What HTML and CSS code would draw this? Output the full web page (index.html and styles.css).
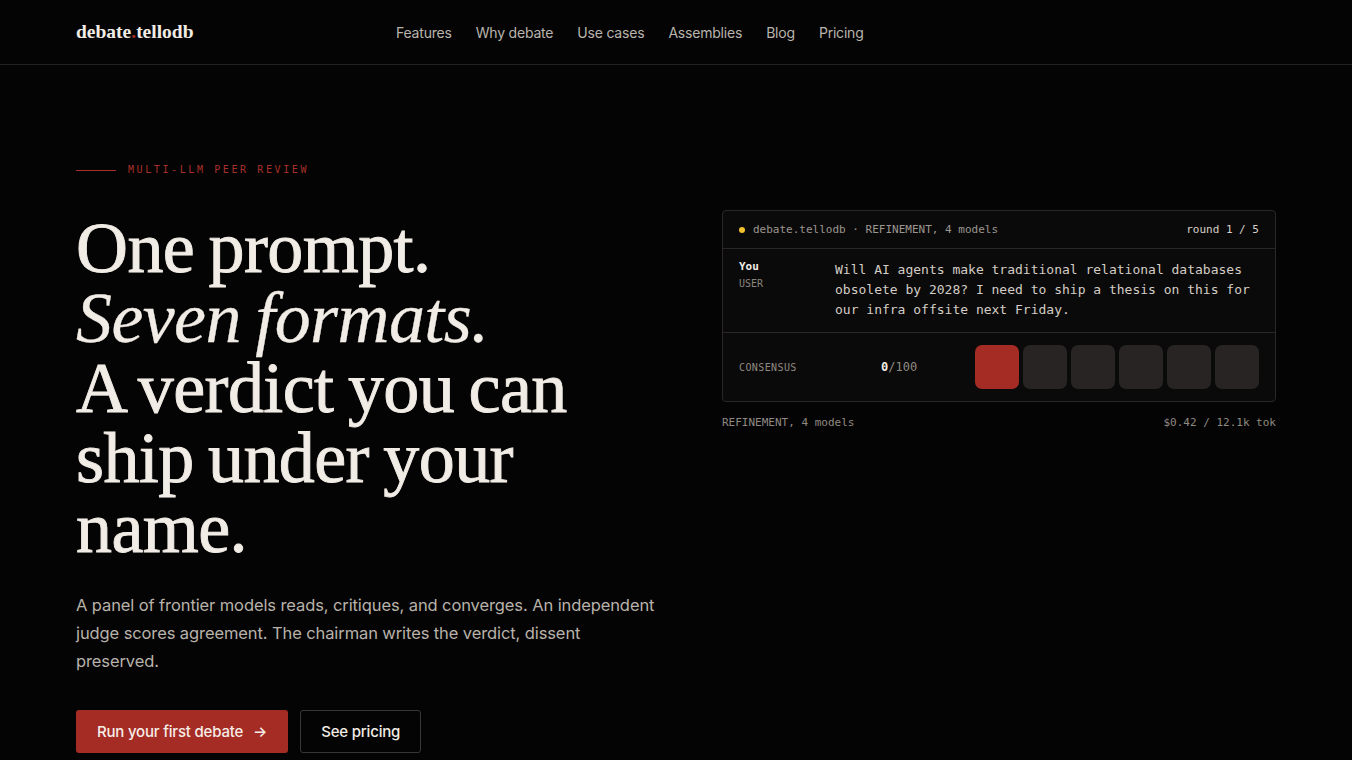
FILE: index.html
```html
<!DOCTYPE html>
<html>

	<head>
		<meta charset="UTF-8">
		<title>debate.tellodb</title>
		<link rel="stylesheet" href="styles.css">
	</head>

	<body>
		<header class="topbar">
			<div class="wrap topbar-inner">
				<a class="logo" href="#">debate<span class="logo-dot">.</span>tellodb</a>
				<nav class="nav">
					<a href="#">Features</a>
					<a href="#">Why debate</a>
					<a href="#">Use cases</a>
					<a href="#">Assemblies</a>
					<a href="#">Blog</a>
					<a href="#">Pricing</a>
				</nav>
			</div>
		</header>

		<section class="hero wrap">
			<div class="hero-copy">
				<div class="eyebrow"><span class="eyebrow-line"></span>MULTI-LLM PEER REVIEW</div>
				<h1 class="headline">One prompt.<br><em>Seven formats.</em><br>A verdict you can ship under your name.</h1>
				<p class="lede">A panel of frontier models reads, critiques, and converges. An independent judge scores agreement. The chairman writes the verdict, dissent preserved.</p>
				<div class="actions">
					<a class="btn btn-primary" href="#">Run your first debate <span class="arrow">&rarr;</span></a>
					<a class="btn btn-ghost" href="#">See pricing</a>
				</div>
			</div>

			<div class="hero-demo">
				<div class="card">
					<div class="card-head">
						<span class="status-dot"></span>
						<span class="card-title">debate.tellodb &middot; REFINEMENT, 4 models</span>
						<span class="card-round">round 1 / 5</span>
					</div>
					<div class="msg">
						<div class="msg-who">
							<div class="msg-name">You</div>
							<div class="msg-role">USER</div>
						</div>
						<div class="msg-text">Will AI agents make traditional relational databases obsolete by 2028? I need to ship a thesis on this for our infra offsite next Friday.</div>
					</div>
					<div class="consensus">
						<div class="consensus-label">CONSENSUS</div>
						<div class="consensus-score"><b>0</b>/100</div>
						<div class="rounds">
							<span class="round-cell on"></span>
							<span class="round-cell"></span>
							<span class="round-cell"></span>
							<span class="round-cell"></span>
							<span class="round-cell"></span>
							<span class="round-cell"></span>
						</div>
					</div>
				</div>
				<div class="card-foot">
					<span>REFINEMENT, 4 models</span>
					<span>$0.42 / 12.1k tok</span>
				</div>
			</div>
		</section>
	</body>

</html>
```

FILE: styles.css
```css
html,
body {
	margin: 0;
	background: #050404;
	color: #efeae3;
	font-family: Inter, "Noto Sans", sans-serif;
}

a {
	color: inherit;
	text-decoration: none;
}

.wrap {
	width: 1200px;
	margin: 0 auto;
}

/* top bar */

.topbar {
	border-bottom: 1px solid #232121;
}

.topbar-inner {
	height: 64px;
	display: grid;
	grid-template-columns: 320px 1fr;
	align-items: center;
}

.logo {
	font-family: "Liberation Serif", serif;
	font-weight: bold;
	font-size: 19.5px;
	color: #f1ece5;
}

.logo-dot {
	color: #a52b25;
}

.nav {
	display: flex;
	gap: 24px;
	font-size: 14px;
	letter-spacing: -0.2px;
	color: #b9b4ae;
}

/* hero */

.hero {
	display: grid;
	grid-template-columns: 1fr 554px;
	gap: 64px;
	padding-top: 97px;
	align-items: start;
}

.eyebrow {
	display: flex;
	align-items: center;
	gap: 12px;
	font-family: "DejaVu Sans Mono", monospace;
	font-size: 10px;
	line-height: 16px;
	letter-spacing: 2.6px;
	color: #a8302a;
}

.eyebrow-line {
	width: 40px;
	height: 1px;
	background: #a8302a;
}

.headline {
	margin: 35px 0 0;
	font-family: "Liberation Serif", serif;
	font-weight: normal;
	font-size: 72px;
	line-height: 70px;
	letter-spacing: -0.6px;
	word-spacing: -3px;
	color: #f1ece5;
	-webkit-text-stroke: 0.9px #f1ece5;
}

.headline em {
	font-style: italic;
	-webkit-text-stroke: 0.3px #f1ece5;
}

.lede {
	margin: 28px 0 0;
	max-width: 582px;
	font-size: 16.5px;
	line-height: 28px;
	letter-spacing: -0.1px;
	color: #b8b2ab;
}

.actions {
	display: flex;
	gap: 12px;
	margin-top: 35px;
}

.btn {
	display: inline-flex;
	align-items: center;
	gap: 10px;
	height: 43px;
	box-sizing: border-box;
	padding: 0 21px;
	border-radius: 3px;
	font-size: 15px;
	font-weight: 500;
	letter-spacing: -0.2px;
}

.btn-primary {
	background: #a52b25;
	color: #f6eee8;
}

.btn-ghost {
	border: 1px solid #3a3635;
	color: #f1ece5;
	padding: 0 20px;
}

/* debate preview card */

.hero-demo {
	margin-top: 48px;
	font-family: "DejaVu Sans Mono", monospace;
}

.card {
	border: 1px solid #2a2726;
	border-radius: 4px;
	background: #0b0a0a;
}

.card-head {
	display: flex;
	align-items: center;
	height: 37px;
	padding: 0 16px;
	border-bottom: 1px solid #2a2726;
	font-size: 11px;
	color: #9c9690;
}

.status-dot {
	width: 6px;
	height: 6px;
	border-radius: 50%;
	background: #f2c12e;
	margin-right: 8px;
}

.card-round {
	margin-left: auto;
	color: #d6d0c9;
}

.msg {
	display: grid;
	grid-template-columns: 96px 1fr;
	padding: 11px 16px 12px;
	border-bottom: 1px solid #2a2726;
}

.msg-name {
	font-size: 11px;
	font-weight: bold;
	color: #f1ece5;
	line-height: 14px;
}

.msg-role {
	font-size: 10px;
	color: #8a847e;
	line-height: 14px;
	margin-top: 3px;
}

.msg-text {
	font-size: 13px;
	line-height: 20px;
	color: #d3cdc6;
}

.consensus {
	display: flex;
	align-items: center;
	padding: 12px 16px;
}

.consensus-label {
	width: 142px;
	font-size: 10px;
	letter-spacing: 0.4px;
	color: #8f8983;
}

.consensus-score {
	font-size: 12px;
	color: #8f8983;
}

.consensus-score b {
	color: #f1ece5;
}

.rounds {
	display: flex;
	gap: 4px;
	margin-left: auto;
}

.round-cell {
	width: 44px;
	height: 44px;
	border-radius: 7px;
	background: #272423;
}

.round-cell.on {
	background: #a52b25;
}

.card-foot {
	display: flex;
	justify-content: space-between;
	margin-top: 13px;
	font-size: 11px;
	line-height: 16px;
	color: #8f8983;
}
```
